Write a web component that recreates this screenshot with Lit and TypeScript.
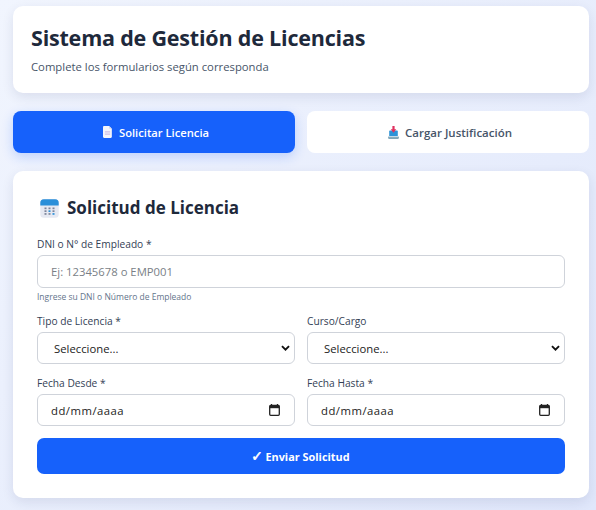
import { LitElement, html, css } from "lit";
import { customElement } from "lit/decorators.js";

const docIcon = html`<svg class="ico" width="9" height="12" viewBox="0 0 12 16"><path d="M1.600 0H8l3.800 3.800v10.600c0 .9-.7 1.600-1.600 1.600H1.600C.7 16 0 15.300 0 14.400V1.600C0 .7.700 0 1.600 0z" fill="#f4f5fb"/><path d="M8 0l3.800 3.800H9C8.400 3.800 8 3.400 8 2.800z" fill="#d5d8ee"/><path d="M2.500 7h7v1.600h-7zM2.500 10h7v1.600h-7z" fill="#cdbfe6"/></svg>`;
const inboxIcon = html`<svg class="ico" width="11" height="13" viewBox="0 0 11 13"><path d="M0 10.200h11v1.300c0 .8-.6 1.500-1.400 1.500H1.400C.6 13 0 12.300 0 11.500z" fill="#7fa6b8"/><path d="M2.200 4.500h6.600c.6 0 1 .4 1 1V10.500H1.200V5.500c0-.6.400-1 1-1z" fill="#2d93d8"/><path d="M0 10.200h11v.9H0z" fill="#dbe7ee"/><path d="M4.400 0h2.200v3.200h1.700L5.500 6.800 2.700 3.200h1.700z" fill="#e0315f"/></svg>`;
const calIcon = html`<svg class="cal" width="19" height="19" viewBox="0 0 19 19"><rect x=".3" y=".3" width="18.400" height="18.400" rx="3.500" fill="#e6e9f2"/><path d="M.3 6.400V3.800a3.500 3.500 0 0 1 3.500-3.500h11.400a3.500 3.500 0 0 1 3.500 3.500v2.600z" fill="#2b8fd9"/><g fill="#7d8499"><rect x="4.500" y="8.500" width="2" height="1.700"/><rect x="8.500" y="8.500" width="2" height="1.700"/><rect x="12.500" y="8.500" width="2" height="1.700"/><rect x="4.500" y="11.300" width="2" height="1.700"/><rect x="12.500" y="11.300" width="2" height="1.700"/><rect x="4.500" y="14.100" width="2" height="1.700"/><rect x="8.500" y="14.100" width="2" height="1.700"/></g><rect x="8.500" y="11.300" width="2" height="1.700" fill="#2b8fd9"/><rect x="12.500" y="14.100" width="2" height="1.700" fill="#2b8fd9"/></svg>`;
const chevron = html`<svg class="chev" width="9" height="6" viewBox="0 0 12 8"><path d="M1.300 1.500 6 6.200l4.700-4.700" fill="none" stroke="#111" stroke-width="2.500"/></svg>`;
const dateIcon = html`<svg class="dateico" width="11" height="12" viewBox="0 0 11 12"><path d="M2.500 0v1.500M8.500 0v1.500" stroke="#222" stroke-width="1.300"/><rect x=".7" y="1.500" width="9.600" height="9.800" rx="1" fill="none" stroke="#222" stroke-width="1.300"/><rect x=".7" y="1.500" width="9.600" height="2.700" fill="#222"/></svg>`;

@customElement("app-root")
export class AppRoot extends LitElement {
  static styles = css`
    :host {
      display: block;
      min-height: 510px;
      height: 510px;
      overflow: hidden;
      box-sizing: border-box;
      padding: 6px 7px 0 13px;
      background: linear-gradient(135deg, #f1f5fe 0%, #e0e7fb 100%);
      font-family: "Open Sans", "Noto Sans", sans-serif;
      color: #1e293b;
    }
    .card {
      background: #fff;
      border-radius: 10px;
      box-shadow: 0 4px 12px rgba(30, 41, 90, 0.1);
    }
    .header {
      height: 87px;
      box-sizing: border-box;
      padding: 17px 18px 0;
    }
    h1 {
      margin: 0;
      font-size: 21.500px;
      letter-spacing: -0.2px;
      line-height: 30px;
      font-weight: 700;
      color: #1e293b;
    }
    .sub {
      margin: 6px 0 0;
      font-size: 11.300px;
      line-height: 16px;
      color: #475569;
    }
    .tabs {
      display: grid;
      grid-template-columns: 1fr 1fr;
      gap: 12px;
      margin-top: 18px;
    }
    .tab {
      height: 42px;
      box-sizing: border-box;
      padding-left: 4px;
      border-radius: 8px;
      display: flex;
      align-items: center;
      justify-content: center;
      gap: 7px;
      font-size: 11.200px;
      font-weight: 600;
      background: #fff;
      color: #475569;
    }
    .tab.active {
      background: #1661fb;
      color: #fff;
      box-shadow: 0 4px 12px rgba(22, 97, 251, 0.22);
    }
    .tab:not(.active) {
      gap: 6px;
      font-size: 11.500px;
    }
    .form {
      margin-top: 18px;
      height: 327px;
      box-sizing: border-box;
      padding: 25px 24px 0;
    }
    h2 {
      margin: 0;
      display: flex;
      align-items: center;
      gap: 8px;
      font-size: 17px;
      line-height: 24px;
      font-weight: 700;
      color: #1e293b;
    }
    .cal { margin-left: 3px; }
    label {
      display: block;
      font-size: 10.200px;
      line-height: 14px;
      font-weight: 500;
      color: #334155;
      margin-bottom: 4px;
    }
    .field { margin-top: 11px; }
    .first { margin-top: 17px; }
    .control {
      height: 32px;
      box-sizing: border-box;
      border: 1px solid #cfd3da;
      border-radius: 6px;
      background: #fff;
      display: flex;
      align-items: center;
      justify-content: space-between;
      font-size: 11.300px;
    }
    .control.input { height: 33px; padding: 0 13px; color: #7a7f87; }
    .control.select { padding: 0 4px 0 16px; color: #222; }
    .control.date { padding: 0 14px 0 13px; color: #222; letter-spacing: .5px; }
    .hint {
      margin-top: 3px;
      font-size: 8.500px;
      line-height: 12px;
      color: #64748b;
    }
    .row {
      display: grid;
      grid-template-columns: 1fr 1fr;
      gap: 12px;
    }
    .row + .row .field { margin-top: 12px; }
    .submit {
      margin-top: 12px;
      height: 36px;
      border-radius: 7px;
      background: #1661fb;
      color: #fff;
      display: flex;
      align-items: center;
      justify-content: center;
      gap: 3px;
      font-size: 10.900px;
      font-weight: 700;
    }
    .check {
      font-family: "DejaVu Sans", sans-serif;
      font-size: 12px;
      line-height: 12px;
      -webkit-text-stroke: 0.5px #fff;
      transform: scale(1.15);
    }
  `;

  render() {
    return html`
      <div class="card header">
        <h1>Sistema de Gestión de Licencias</h1>
        <p class="sub">Complete los formularios según corresponda</p>
      </div>
      <div class="tabs">
        <div class="tab active">${docIcon}<span>Solicitar Licencia</span></div>
        <div class="tab">${inboxIcon}<span>Cargar Justificación</span></div>
      </div>
      <div class="card form">
        <h2>${calIcon}<span>Solicitud de Licencia</span></h2>
        <div class="field first">
          <label>DNI o N° de Empleado *</label>
          <div class="control input">Ej: 12345678 o EMP001</div>
          <div class="hint">Ingrese su DNI o Número de Empleado</div>
        </div>
        <div class="row">
          <div class="field">
            <label>Tipo de Licencia *</label>
            <div class="control select"><span>Seleccione...</span>${chevron}</div>
          </div>
          <div class="field">
            <label>Curso/Cargo</label>
            <div class="control select"><span>Seleccione...</span>${chevron}</div>
          </div>
        </div>
        <div class="row">
          <div class="field">
            <label>Fecha Desde *</label>
            <div class="control date"><span>dd/mm/aaaa</span>${dateIcon}</div>
          </div>
          <div class="field">
            <label>Fecha Hasta *</label>
            <div class="control date"><span>dd/mm/aaaa</span>${dateIcon}</div>
          </div>
        </div>
        <div class="submit"><span class="check">✓</span><span>Enviar Solicitud</span></div>
      </div>
    `;
  }
}
